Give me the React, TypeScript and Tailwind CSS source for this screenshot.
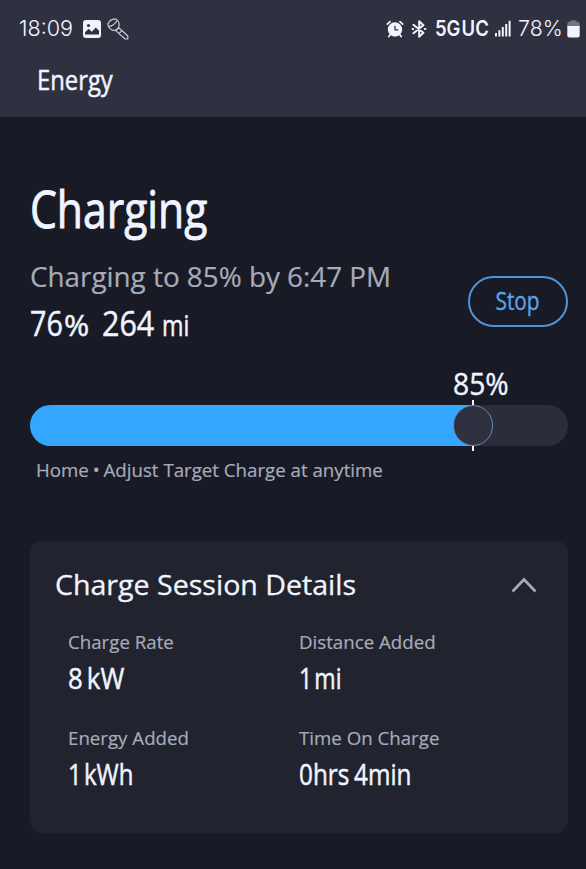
const details = [
  { label: "Charge Rate", value: "8 kW", valueClass: "scale-x-[0.86] [word-spacing:-3px]" },
  { label: "Distance Added", value: "1 mi", valueClass: "scale-x-[0.77] [word-spacing:-5px]" },
  { label: "Energy Added", value: "1 kWh", valueClass: "scale-x-[0.8] [word-spacing:-5px]" },
  { label: "Time On Charge", value: "0hrs 4min", valueClass: "scale-x-[0.81] [word-spacing:-2px]" },
]

function PictureIcon() {
  return (
    <svg className="h-[18px] w-[18px]" viewBox="0 0 18 18">
      <rect width="18" height="18" rx="3" fill="#f1f4ff" />
      <circle cx="5.5" cy="5.5" r="1.6" fill="#2f3140" />
      <path d="M2 14.5V12.3L5.7 8.8L8.8 11.8L12.8 7.6L16 10.8V14.5Z" fill="#2f3140" />
    </svg>
  )
}

function BrushIcon() {
  return (
    <svg className="h-[22px] w-[22px]" viewBox="0 0 22 22" fill="none" stroke="#c9ccd8" strokeWidth="1.2" strokeLinejoin="round">
      <path d="M.8 6.2C2 3 4.5 1 8.2 .8C10.6 2 12.2 4.4 12.2 7L11.4 10.2L8 12.6C4.5 12.6 1.6 10 .8 6.2Z" />
      <path d="M2 8.4C5.6 8 8.6 5.2 10.2 2.2" />
      <path d="M8.8 12.4L11.6 9.8L14.6 12.2L20.8 18V21H18.2L12 15.6Z" />
      <path d="M12 15.6L14.6 12.8" />
    </svg>
  )
}

function AlarmIcon() {
  return (
    <svg className="h-[18px] w-[18px]" viewBox="0 0 18 18" fill="none" strokeLinecap="round">
      <path d="M1.4 4.1L4 1.7M16.6 4.1L14 1.7M4.4 14.5L2.8 16.5M13.6 14.5L15.2 16.5" stroke="#f1f4ff" strokeWidth="1.8" />
      <circle cx="9" cy="9.5" r="7.2" fill="#f1f4ff" />
      <path d="M9 6V9.8H11.8" stroke="#2f3140" strokeWidth="1.2" />
    </svg>
  )
}

function BluetoothIcon() {
  return (
    <svg className="h-[18px] w-4" viewBox="0 0 16 18" fill="none" stroke="#f1f4ff" strokeWidth="2" strokeLinejoin="round" strokeLinecap="round">
      <path d="M2.4 4.8L12.4 12.8L8.2 16.8V1.2L12.4 5.2L2.4 13.2" />
      <path d="M1.6 9H2.2M13.8 9H14.4" />
    </svg>
  )
}

function SignalIcon() {
  return (
    <svg className="h-[17px] w-4" viewBox="0 0 16 17" fill="#f1f4ff">
      <rect x="0" y="13" width="2" height="3.5" />
      <rect x="3.4" y="10.2" width="2" height="6.3" />
      <rect x="6.8" y="7" width="2" height="9.5" />
      <rect x="10.2" y="4" width="2" height="12.5" />
      <rect x="13.6" y="0.8" width="2" height="15.7" />
    </svg>
  )
}

function BatteryIcon() {
  return (
    <svg className="h-[18px] w-[13px]" viewBox="0 0 13 18">
      <path d="M4 1.5Q4 .3 5 .3H8Q9 .3 9 1.5H10.5Q12.7 1.8 12.7 4V7H.3V4Q.3 1.8 2.5 1.5Z" fill="#717584" />
      <path d="M.3 6H12.7V15.5Q12.7 17.5 10.7 17.5H2.3Q.3 17.5 .3 15.5Z" fill="#f1f4ff" />
    </svg>
  )
}

function StatusBar() {
  return (
    <div className="flex h-14 items-center pt-px pl-[19px] font-['Inter',sans-serif] text-[22px] text-[#f1f4ff]">
      <span className="w-16 origin-left scale-x-[0.98] font-light">18:09</span>
      <PictureIcon />
      <div className="ml-1.5">
        <BrushIcon />
      </div>
      <div className="ml-auto flex items-center">
        <AlarmIcon />
        <div className="ml-[7px]">
          <BluetoothIcon />
        </div>
        <span className="ml-2 w-[60px] origin-left scale-x-[0.88] text-[21px] font-semibold whitespace-nowrap [word-spacing:-4px]">
          5G UC
        </span>
        <SignalIcon />
        <span className="ml-[7px] w-[49px] origin-left scale-x-[0.97] font-light whitespace-nowrap">78%</span>
        <div className="mr-1.5">
          <BatteryIcon />
        </div>
      </div>
    </div>
  )
}

function ChargeSlider() {
  return (
    <div className="mt-4">
      <div className="h-10 pl-[423px] text-[31px] leading-10 [-webkit-text-stroke:0.4px]">
        <span className="inline-block origin-left scale-x-[0.91]">85%</span>
      </div>
      <div className="relative mt-0.5 h-[41px] rounded-full bg-[#2b2d38]">
        <div className="h-full w-[443px] rounded-l-full bg-[#33a6ff]" />
        <div className="absolute -top-[5px] left-[442px] h-[51px] w-0.5 bg-[#f1f4ff]" />
        <div className="absolute top-0 left-[423px] h-[41px] w-10 rounded-full border-[1.5px] border-[#5e8fbd] bg-[#2f3140]" />
      </div>
      <p className="mt-3 ml-1.5 h-6 w-fit origin-left scale-x-[1.01] text-[18.5px] leading-6 whitespace-nowrap text-[#a7abb9] [-webkit-text-stroke:0.2px]">
        Home <span className="-mx-px">•</span> Adjust Target Charge at anytime
      </p>
    </div>
  )
}

function SessionDetails() {
  return (
    <section className="mt-[59px] h-[292px] rounded-xl bg-[#21242e] pt-[23px]">
      <div className="flex h-10 items-center justify-between pr-[31px] pl-[25px]">
        <h2 className="origin-left scale-x-[1.02] text-[28px] leading-10 whitespace-nowrap [-webkit-text-stroke:0.3px]">
          Charge Session Details
        </h2>
        <svg className="mt-0.5 h-4 w-[26px]" viewBox="0 0 26 16" fill="none" stroke="#a7abb9" strokeWidth="2.6">
          <path d="M1.5 14.5L13 2.5L24.5 14.5" />
        </svg>
      </div>
      <div className="mt-6 grid grid-cols-[231px_1fr] gap-y-6 pl-[38px]">
        {details.map((item) => (
          <div key={item.label}>
            <p className="h-7 w-fit origin-left scale-x-[1.01] text-[18.5px] leading-7 whitespace-nowrap text-[#a7abb9] [-webkit-text-stroke:0.2px]">
              {item.label}
            </p>
            <p
              className={`h-11 w-fit origin-left text-[30px] leading-11 whitespace-nowrap [-webkit-text-stroke:0.5px] ${item.valueClass}`}
            >
              {item.value}
            </p>
          </div>
        ))}
      </div>
    </section>
  )
}

export default function App() {
  return (
    <div className="h-[869px] w-[586px] overflow-hidden bg-[#181a26] font-['Open_Sans',sans-serif] text-[#f1f4ff]">
      <header className="h-[117px] bg-[#2f3140]">
        <StatusBar />
        <p className="ml-[37px] h-12 w-fit origin-left scale-x-[0.85] text-[28px] leading-[46px] [-webkit-text-stroke:0.5px]">
          Energy
        </p>
      </header>
      <main className="pt-[59px] pr-[18px] pl-[30px]">
        <h1 className="h-16 w-fit origin-left scale-x-[0.82] text-[52px] leading-16 [-webkit-text-stroke:0.9px]">Charging</h1>
        <div className="mt-[13px] flex justify-between">
          <div>
            <p className="h-12 w-fit origin-left scale-x-[1.05] text-[26.5px] leading-12 whitespace-nowrap text-[#a7abb9] [-webkit-text-stroke:0.2px]">
              Charging to 85% by 6:47 PM
            </p>
            <p className="flex h-[46px] w-fit items-baseline text-[35px] leading-[44px] whitespace-nowrap [-webkit-text-stroke:0.5px]">
              <span className="w-[34px] origin-left scale-x-[0.82]">76</span>
              <span className="w-[38px] origin-left scale-x-[1.05] text-[29px]">%</span>
              <span className="w-[60px] origin-left scale-x-[0.87]">264</span>
              <span className="origin-left scale-x-[0.8] text-[29px]">mi</span>
            </p>
          </div>
          <button className="mt-[23px] flex h-[51px] w-[100px] items-center justify-center rounded-full border-2 border-[#5095d6] text-[26px] text-[#5aa4e8] [-webkit-text-stroke:0.4px]">
            <span className="-mt-0.5 scale-x-[0.8]">Stop</span>
          </button>
        </div>
        <ChargeSlider />
        <SessionDetails />
      </main>
    </div>
  )
}
